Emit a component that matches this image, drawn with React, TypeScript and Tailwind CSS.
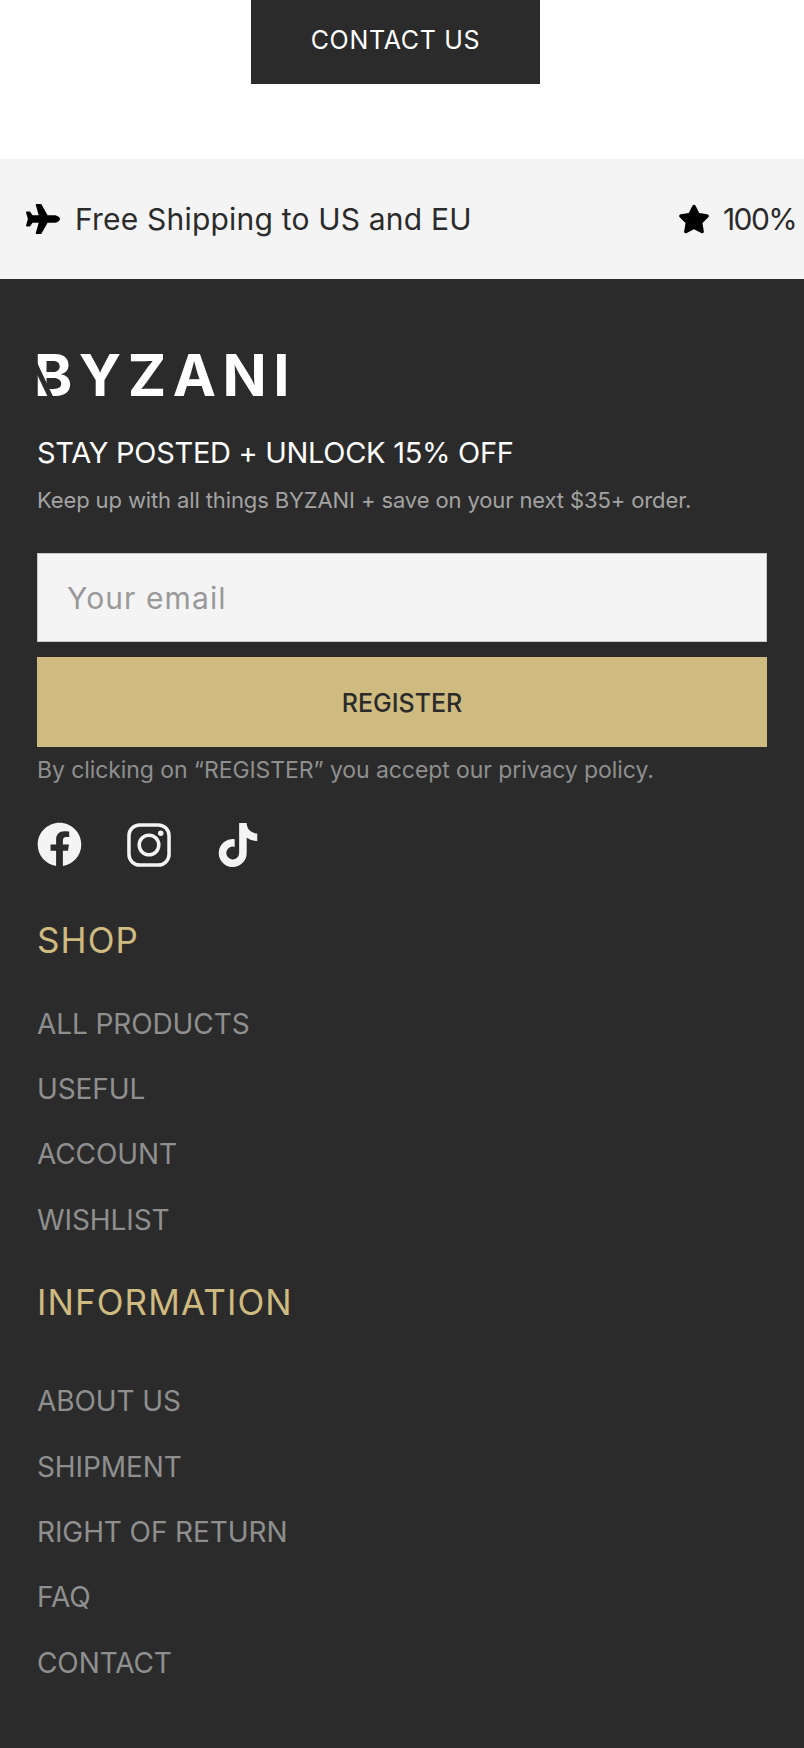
import React from 'react';
import { FaFacebook, FaPlane, FaStar, FaTiktok } from 'react-icons/fa';

const shopLinks = ['ALL PRODUCTS', 'USEFUL', 'ACCOUNT', 'WISHLIST'];
const infoLinks = ['ABOUT US', 'SHIPMENT', 'RIGHT OF RETURN', 'FAQ', 'CONTACT'];

const font = { fontFamily: 'Inter, "Liberation Sans", sans-serif' };

const LinkList: React.FC<{ links: string[] }> = ({ links }) => (
  <ul className="flex flex-col">
    {links.map((link) => (
      <li key={link} className="h-[65.4px] flex items-center text-[28px] tracking-[-0.1px] text-[#8f8f8f]">
        {link}
      </li>
    ))}
  </ul>
);

export default function App() {
  return (
    <div className="w-[804px] h-[1748px] overflow-hidden bg-white" style={font}>
      {/* contact button */}
      <div className="h-[159px] pl-[251px]">
        <a className="w-[289px] h-[84px] bg-[#2b2b2b] flex items-center justify-center text-white text-[25px] tracking-[0.7px] pb-[3px]">
          CONTACT US
        </a>
      </div>

      {/* usp strip */}
      <div className="h-[120px] bg-[#f4f4f4] flex items-center overflow-hidden whitespace-nowrap text-[#2b2b2b] text-[30px] tracking-[0.2px]">
        <div className="flex items-center shrink-0 w-[678px] pl-[26px] gap-[15px]">
          <FaPlane className="text-black w-[34px] h-[34px]" />
          <span>Free Shipping to US and EU</span>
        </div>
        <div className="flex items-center shrink-0 gap-[13px]">
          <FaStar className="text-black w-[32px] h-[32px]" />
          <span className="tracking-[-1.6px]">100% Guarantee</span>
        </div>
      </div>

      {/* footer */}
      <footer className="h-[1469px] bg-[#2b2b2b] px-[37px] pt-[73px]">
        <div className="relative h-[46px] flex items-center text-white font-bold text-[58px] leading-none tracking-[6.5px] -ml-[3px]">
          BYZANI
          <svg className="absolute left-0 top-0" width="40" height="46" viewBox="0 0 40 46">
            <path d="M1 12 L17 46" stroke="#2b2b2b" strokeWidth="5" fill="none" />
          </svg>
        </div>
        <h3 className="mt-[35px] text-white text-[29px] leading-[40px] tracking-[-0.3px]">STAY POSTED + UNLOCK 15% OFF</h3>
        <p className="mt-[11px] text-[#a3a3a3] text-[22px] leading-[32px] tracking-[-0.12px]">
          Keep up with all things BYZANI + save on your next $35+ order.
        </p>
        <input
          readOnly
          placeholder="Your email"
          className="mt-[37px] block w-full h-[89px] bg-[#f4f4f4] border border-[#c9c9c9] px-[29px] text-[30px] tracking-[1.1px] placeholder:text-[#999999] outline-none"
        />
        <button className="mt-[15px] block w-full h-[90px] pt-[3px] bg-[#cfba80] text-[#2b2b2b] text-[25px] font-medium">
          REGISTER
        </button>
        <p className="mt-[7px] text-[#8f8f8f] text-[23px] leading-[32px] tracking-[-0.08px]">
          By clicking on “REGISTER” you accept our privacy policy.
        </p>
        <div className="mt-[36px] flex items-center text-[#f4f4f4]">
          <FaFacebook className="w-[45px] h-[45px]" />
          <svg className="ml-[45px] w-[44px] h-[44px]" viewBox="0 0 45 45" fill="none" stroke="currentColor" strokeWidth="3.6">
            <rect x="2" y="2" width="41" height="41" rx="11" />
            <circle cx="22.5" cy="22.5" r="10" />
            <circle cx="34.5" cy="10.5" r="2.8" fill="currentColor" stroke="none" />
          </svg>
          <FaTiktok className="ml-[46px] w-[42px] h-[44px]" />
        </div>
        <h4 className="mt-[48px] h-[50px] flex items-center text-[#cfba80] text-[35px] tracking-[1.1px]">SHOP</h4>
        <div className="mt-[26px]">
          <LinkList links={shopLinks} />
        </div>
        <h4 className="mt-[25px] h-[50px] flex items-center text-[#cfba80] text-[35px] tracking-[1.1px]">INFORMATION</h4>
        <div className="mt-[41px]">
          <LinkList links={infoLinks} />
        </div>
      </footer>
    </div>
  );
}
